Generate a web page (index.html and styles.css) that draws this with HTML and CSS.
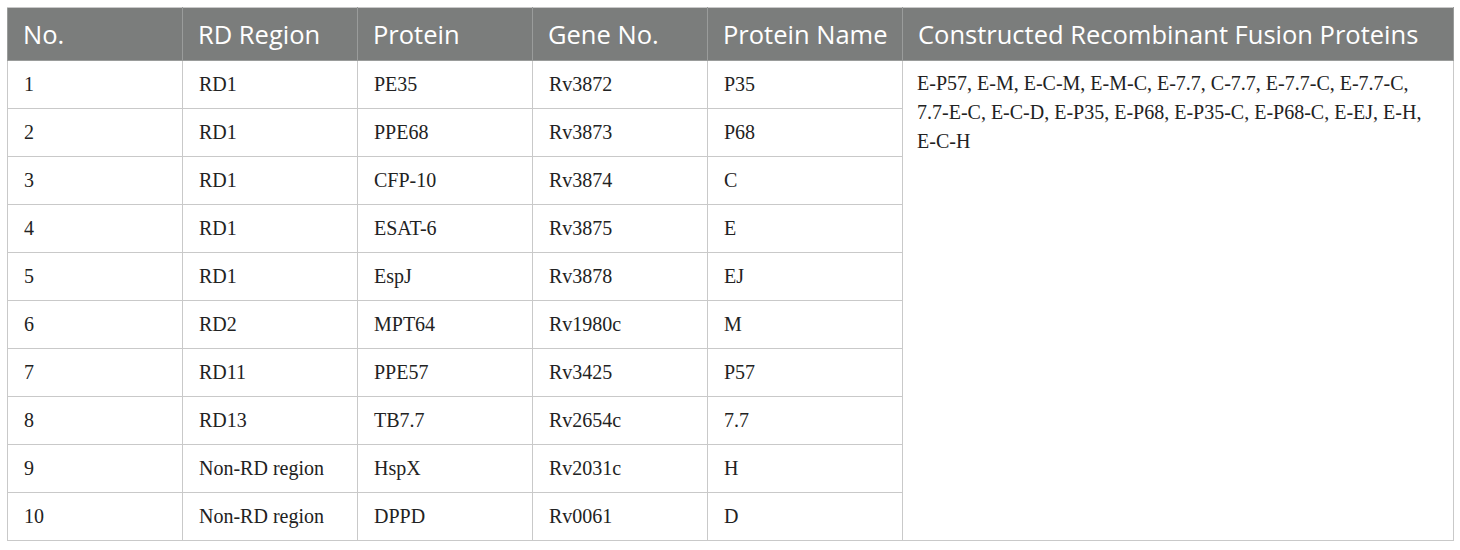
FILE: index.html
```html
<!DOCTYPE html>
<html>
<head>
<meta charset="utf-8">
<link rel="stylesheet" href="styles.css">
</head>
<body>
<table class="data">
  <colgroup>
    <col class="c1"><col class="c2"><col class="c3"><col class="c4"><col class="c5"><col class="c6">
  </colgroup>
  <thead>
    <tr>
      <th>No.</th><th>RD Region</th><th>Protein</th><th>Gene No.</th><th>Protein Name</th><th>Constructed Recombinant Fusion Proteins</th>
    </tr>
  </thead>
  <tbody>
    <tr><td>1</td><td>RD1</td><td>PE35</td><td>Rv3872</td><td>P35</td><td class="fusion" rowspan="10">E-P57, E-M, E-C-M, E-M-C, E-7.7, C-7.7, E-7.7-C, E-7.7-C, 7.7-E-C, E-C-D, E-P35, E-P68, E-P35-C, E-P68-C, E-EJ, E-H, E-C-H</td></tr>
    <tr><td>2</td><td>RD1</td><td>PPE68</td><td>Rv3873</td><td>P68</td></tr>
    <tr><td>3</td><td>RD1</td><td>CFP-10</td><td>Rv3874</td><td>C</td></tr>
    <tr><td>4</td><td>RD1</td><td>ESAT-6</td><td>Rv3875</td><td>E</td></tr>
    <tr><td>5</td><td>RD1</td><td>EspJ</td><td>Rv3878</td><td>EJ</td></tr>
    <tr><td>6</td><td>RD2</td><td>MPT64</td><td>Rv1980c</td><td>M</td></tr>
    <tr><td>7</td><td>RD11</td><td>PPE57</td><td>Rv3425</td><td>P57</td></tr>
    <tr><td>8</td><td>RD13</td><td>TB7.7</td><td>Rv2654c</td><td>7.7</td></tr>
    <tr><td>9</td><td>Non-RD region</td><td>HspX</td><td>Rv2031c</td><td>H</td></tr>
    <tr><td>10</td><td>Non-RD region</td><td>DPPD</td><td>Rv0061</td><td>D</td></tr>
  </tbody>
</table>
</body>
</html>
```
FILE: styles.css
```css
html, body {
  margin: 0;
  background: #ffffff;
}
body {
  padding: 7px;
}
.data {
  border-collapse: collapse;
  table-layout: fixed;
  width: 1446px;
  border: 1px solid #c9c9c9;
}
.c1, .c2, .c3, .c4 { width: 175px; }
.c5 { width: 195px; }
.c6 { width: 551px; }
.data th {
  background: #7b7d7c;
  color: #ffffff;
  font-family: "Open Sans", sans-serif;
  font-weight: 400;
  font-size: 25.5px;
  text-align: left;
  height: 53px;
  padding: 0 15px;
  border: 1px solid #9a9c9b;
  border-top-color: #c9c9c9;
  box-sizing: border-box;
  white-space: nowrap;
}
.data td {
  font-family: "Liberation Serif", "Times New Roman", serif;
  font-size: 20px;
  color: #222222;
  height: 48px;
  padding: 0 16px;
  border: 1px solid #c9c9c9;
  box-sizing: border-box;
}
.data td.fusion {
  vertical-align: top;
  padding: 8px 14px;
  line-height: 29px;
}
```
